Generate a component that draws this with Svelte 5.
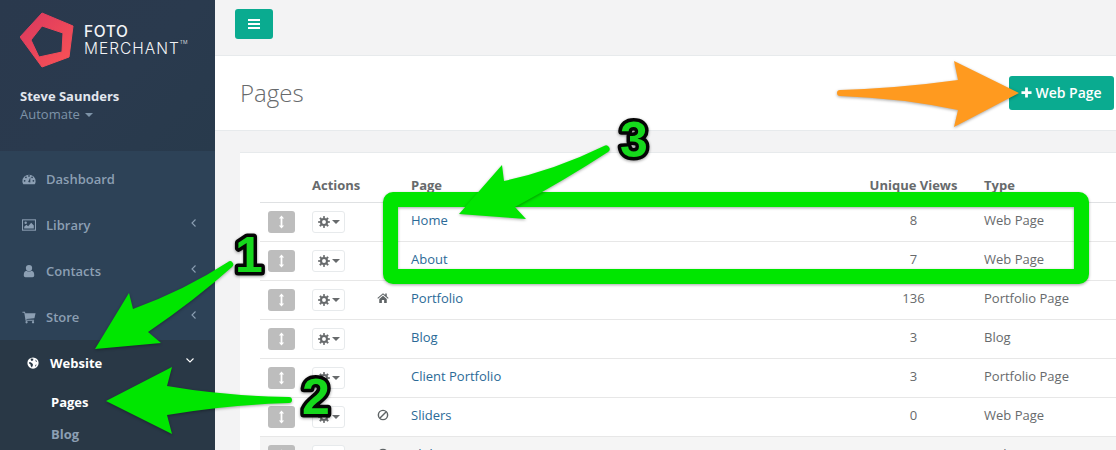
<script>
  const rows = [
    { icon: '', name: 'Home', views: 8, type: 'Web Page' },
    { icon: '', name: 'About', views: 7, type: 'Web Page' },
    { icon: 'home', name: 'Portfolio', views: 136, type: 'Portfolio Page' },
    { icon: '', name: 'Blog', views: 3, type: 'Blog' },
    { icon: '', name: 'Client Portfolio', views: 3, type: 'Portfolio Page' },
    { icon: 'ban', name: 'Sliders', views: 0, type: 'Web Page' },
    { icon: 'ban', name: 'Slider 1', views: 0, type: 'Web Page', hover: true }
  ];
  const nav = [
    { label: 'Dashboard', icon: 'dash' },
    { label: 'Library', icon: 'image', more: true },
    { label: 'Contacts', icon: 'user', more: true },
    { label: 'Store', icon: 'cart', more: true }
  ];
</script>

{#snippet gear()}
  <svg class="gear" viewBox="0 0 16 16">
    <circle cx="8" cy="8" r="4" fill="none" stroke="currentColor" stroke-width="2.8" />
    <circle cx="8" cy="8" r="6.4" fill="none" stroke="currentColor" stroke-width="2.6" pathLength="16" stroke-dasharray="1 1" stroke-dashoffset="0.5" />
  </svg>
{/snippet}

{#snippet navIcon(name)}
  <svg class="nicon" viewBox="0 0 16 16" fill="currentColor">
    {#if name === 'dash'}
      <path d="M0.5,10.5 A7.5,7.5 0 1 1 15.5,10.5 Q15.5,12.5 14.5,14 H1.5 Q0.5,12.5 0.5,10.5 Z" />
      <circle cx="3" cy="10" r="1" fill="#2d4257" />
      <circle cx="4.5" cy="6" r="1" fill="#2d4257" />
      <circle cx="8" cy="4.5" r="1" fill="#2d4257" />
      <circle cx="13" cy="10" r="1" fill="#2d4257" />
      <circle cx="11.5" cy="6" r="1" fill="#2d4257" />
      <path d="M7,11.5 L9.5,6 L9.5,12 Z" fill="#2d4257" />
    {:else if name === 'image'}
      <rect x="0.6" y="2.1" width="14.8" height="11.8" fill="none" stroke="currentColor" stroke-width="1.2" />
      <circle cx="4.2" cy="5.5" r="1.4" />
      <path d="M2.5,12 V10 L5,7.8 L7,9.5 L10.5,5.5 L13.5,8.5 V12 Z" />
    {:else if name === 'user'}
      <circle cx="8" cy="4.6" r="3.6" />
      <path d="M2,13 Q2,8 5.2,7.6 Q8,9.6 10.8,7.6 Q14,8 14,13 Q14,15 12,15 H4 Q2,15 2,13 Z" />
    {:else if name === 'cart'}
      <path d="M0.5,2 H3.4 L3.8,3.6 H15.5 L14.2,9.4 L5,10.2 L5.2,11.2 H13.8 V12.4 H4.1 L2.6,3.2 H0.5 Z" />
      <circle cx="5.2" cy="14" r="1.3" />
      <circle cx="12.6" cy="14" r="1.3" />
    {:else if name === 'globe'}
      <circle cx="8" cy="8" r="7.5" />
      <path d="M5,2 L8.5,2.4 L8,4.6 L6,5.4 L5,4 Z" fill="#293846" />
      <path d="M2.5,7 L5,7 L7.5,9 L8,10.5 L6.5,14 L5,12 L4.5,9.8 L2.8,8.6 Z" fill="#293846" />
      <path d="M11,3.4 L13.4,5.5 L12,6.5 Z M11.5,10.2 L12.8,10 L11.8,12.4 L10.6,12.6 Z" fill="#293846" />
    {/if}
  </svg>
{/snippet}

<div class="page">
  <aside class="sidebar">
    <header class="profile">
      <div class="logo">
        <svg class="mark" viewBox="0 0 80 80">
          <defs>
            <linearGradient id="lg" x1="0" y1="0" x2="1" y2="1">
              <stop offset="0" stop-color="#d9385f" />
              <stop offset="1" stop-color="#fa5355" />
            </linearGradient>
          </defs>
          <path fill="url(#lg)" fill-rule="evenodd" stroke="url(#lg)" stroke-width="1" stroke-linejoin="round"
            d="M22,13 L53,26 L49,57 L22,67 L0,37 Z M22,26 L11,40 L19,57 L42,52 L43,33 Z" />
        </svg>
        <div class="brand">
          <span class="foto">FOTO</span>
          <span class="merchant">MERCHANT<sup>TM</sup></span>
        </div>
      </div>
      <div class="who">Steve Saunders</div>
      <div class="role">Automate <i class="caret"></i></div>
    </header>
    <nav class="menu">
      {#each nav as item}
        <a class="item">
          {@render navIcon(item.icon)}
          <span>{item.label}</span>
          {#if item.more}
            <svg class="chev" viewBox="0 0 5 8"><path d="M4.5,0.5 L1,4 L4.5,7.5" fill="none" stroke="currentColor" stroke-width="1.1" /></svg>
          {/if}
        </a>
      {/each}
      <div class="active">
        <a class="item on">
          {@render navIcon('globe')}
          <span>Website</span>
          <svg class="down" viewBox="0 0 8 5"><path d="M0.5,0.5 L4,4 L7.5,0.5" fill="none" stroke="currentColor" stroke-width="1.1" /></svg>
        </a>
        <a class="sub cur">Pages</a>
        <a class="sub">Blog</a>
      </div>
    </nav>
  </aside>

  <main class="main">
    <div class="topbar">
      <button class="burger" aria-label="Menu">
        <svg viewBox="0 0 12 10" fill="#fff"><rect y="0" width="12" height="2" /><rect y="4" width="12" height="2" /><rect y="8" width="12" height="2" /></svg>
      </button>
    </div>
    <div class="heading">
      <h1>Pages</h1>
      <button class="add"><svg viewBox="0 0 12 12" fill="#fff"><path d="M4.5,0.5 H7.5 V4.5 H11.5 V7.5 H7.5 V11.5 H4.5 V7.5 H0.5 V4.5 H4.5 Z" /></svg>Web Page</button>
    </div>
    <section class="content">
      <div class="card">
        <table>
          <colgroup>
            <col class="c1" /><col class="c2" /><col class="c3" /><col class="c4" /><col class="c5" /><col />
          </colgroup>
          <thead>
            <tr><th></th><th>Actions</th><th></th><th>Page</th><th class="num">Unique Views</th><th>Type</th></tr>
          </thead>
          <tbody>
            {#each rows as r}
              <tr class:hover={r.hover}>
                <td>
                  <span class="drag">
                    <svg viewBox="0 0 8 16" fill="#fff"><path d="M4,0.5 L7,4 H5 V12 H7 L4,15.5 L1,12 H3 V4 H1 Z" /></svg>
                  </span>
                </td>
                <td><span class="act">{@render gear()}<i class="caret dark"></i></span></td>
                <td class="flag">
                  {#if r.icon === 'home'}
                    <svg viewBox="0 0 16 14" fill="#5f6466"><path d="M8,0.5 L0.5,7 L1.4,8 L8,2.4 L14.6,8 L15.5,7 L13,4.8 V1 H11 V3 Z" /><path d="M3,8.2 L8,4 L13,8.2 V13.5 H9.5 V9.8 H6.5 V13.5 H3 Z" /></svg>
                  {:else if r.icon === 'ban'}
                    <svg viewBox="0 0 14 14" fill="none" stroke="#5f6466" stroke-width="1.7"><circle cx="7" cy="7" r="5.4" /><path d="M3.2,10.8 L10.8,3.2" /></svg>
                  {/if}
                </td>
                <td><a class="link">{r.name}</a></td>
                <td class="num">{r.views}</td>
                <td>{r.type}</td>
              </tr>
            {/each}
          </tbody>
        </table>
      </div>
    </section>
  </main>

  <svg class="notes" viewBox="0 0 1116 450">
    <path class="shadow" fill="#00e600" fill-rule="evenodd"
      d="M393,192 H1079 A10,10 0 0 1 1089,202 V274 A10,10 0 0 1 1079,284 H393 A10,10 0 0 1 383,274 V202 A10,10 0 0 1 393,192 Z M398,207 V269 H1074 V207 Z" />
    <path class="shadow" fill="#00e600" d="M95,349 L129,293 L133,309 Q185,290 228,262 A3,3 0 0 1 232,267 Q195,300 148,332 L161,343 Z" />
    <path class="shadow" fill="#00e600" d="M106,401 L172,367 L167,386 Q225,396 289,397 A3,3 0 0 1 289,403 Q225,405 167,415 L172,434 Z" />
    <path class="shadow" fill="#00e600" d="M459,214 L502,165 L504,181 Q555,170 604,146 A3.5,3.5 0 0 1 608,152 Q565,180 515,207 L526,219 Z" />
    <path class="shadow" fill="#ff9a1f" d="M1019,93 L954,61 L958,80 Q900,88 840,90 A3,3 0 0 0 840,96 Q900,98 958,110 L954,127 Z" />
    <text class="digit" x="249" y="272">1</text>
    <text class="digit" x="316" y="414">2</text>
    <text class="digit" x="634" y="157">3</text>
  </svg>
</div>

<style>
  :global(body) {
    margin: 0;
    font-family: "Open Sans", "Liberation Sans", sans-serif;
    font-size: 13px;
    color: #676a6c;
  }
  .page {
    position: relative;
    display: flex;
    width: 1116px;
    height: 450px;
    overflow: hidden;
    background: #f3f3f4;
  }
  .sidebar {
    flex: 0 0 215px;
    background: #2d4257;
    color: #8c9fb3;
    font-weight: 600;
  }
  .profile {
    box-sizing: border-box;
    height: 151px;
    padding: 13px 0 0 20px;
    background: linear-gradient(135deg, #2a394d 0%, #2a3a4e 55%, #283a4c 100%);
  }
  .logo {
    display: flex;
    align-items: flex-start;
    height: 54px;
    margin-bottom: 20px;
  }
  .mark {
    flex: 0 0 80px;
    width: 80px;
    height: 80px;
    margin: -13px -16px 0 0;
  }
  .brand {
    display: flex;
    flex-direction: column;
    padding-top: 10px;
    color: #f2f3f5;
    font-family: Inter, "Liberation Sans", sans-serif;
    line-height: 17px;
  }
  .foto {
    font-size: 15.5px;
    font-weight: 500;
    letter-spacing: 0.6px;
  }
  .merchant {
    font-size: 15.5px;
    font-weight: 300;
    letter-spacing: 1px;
    white-space: nowrap;
  }
  .merchant sup {
    font-size: 5px;
    line-height: 0;
    vertical-align: 10px;
    margin-left: 0;
    letter-spacing: 0;
  }
  .who {
    color: #e3e7ee;
    font-weight: 700;
    font-size: 13px;
    line-height: 18px;
  }
  .role {
    font-weight: 400;
    font-size: 13px;
    line-height: 18px;
    color: #7e93a8;
  }
  .caret {
    display: inline-block;
    width: 0;
    height: 0;
    margin-left: 2px;
    vertical-align: 2px;
    border: 4px solid transparent;
    border-top-color: currentColor;
    border-bottom: 0;
  }
  .menu {
    padding-top: 5px;
  }
  .item {
    display: flex;
    align-items: center;
    height: 18px;
    padding: 14px 19px 14px 22px;
    line-height: 18px;
  }
  .nicon {
    flex: 0 0 14px;
    width: 14px;
    height: 14px;
    margin-right: 10px;
  }
  .chev {
    width: 5px;
    height: 8px;
    margin: -5px 0 0 auto;
  }
  .active {
    background: #293846;
    height: 110px;
  }
  .on {
    padding-left: 27px;
    padding-right: 21px;
    color: #fff;
    font-weight: 700;
  }
  .on .nicon {
    flex-basis: 12px;
    width: 12px;
    height: 12px;
    margin-right: 11px;
  }
  .down {
    width: 8px;
    height: 5px;
    margin: -6px 0 0 auto;
  }
  .sub {
    display: block;
    padding: 7px 0 7px 51px;
    line-height: 18px;
    font-weight: 700;
  }
  .cur {
    color: #fff;
  }
  .main {
    flex: 1 1 auto;
    min-width: 0;
    display: flex;
    flex-direction: column;
  }
  .topbar {
    box-sizing: border-box;
    height: 56px;
    flex: none;
    padding: 9px 20px;
    border-bottom: 1px solid #e7eaec;
  }
  button {
    border: 0;
    font: inherit;
    background: #0aab90;
    color: #fff;
    border-radius: 3px;
    padding: 0;
  }
  .burger {
    display: flex;
    align-items: center;
    justify-content: center;
    width: 38px;
    height: 30px;
  }
  .burger svg {
    width: 12px;
    height: 10px;
  }
  .heading {
    box-sizing: border-box;
    height: 75px;
    flex: none;
    display: flex;
    align-items: center;
    justify-content: space-between;
    padding: 0 2px 1px 25px;
    background: #fff;
    border-bottom: 1px solid #e7eaec;
  }
  h1 {
    margin: 0;
    font-size: 24px;
    font-weight: 300;
    color: #676a6c;
  }
  .add {
    display: flex;
    align-items: center;
    justify-content: center;
    gap: 3px;
    width: 105px;
    height: 34px;
    font-size: 14px;
    font-weight: 600;
  }
  .add svg {
    width: 11px;
    height: 11px;
  }
  .content {
    padding: 21px 0 0 25px;
    overflow: hidden;
  }
  .card {
    box-sizing: border-box;
    width: 920px;
    height: 400px;
    padding: 15px 20px 0;
    background: #fff;
    border-top: 1px solid #e7eaec;
  }
  table {
    width: 100%;
    table-layout: fixed;
    border-collapse: separate;
    border-spacing: 0;
  }
  .c1 { width: 44px; }
  .c2 { width: 65px; }
  .c3 { width: 34px; }
  .c4 { width: 448px; }
  .c5 { width: 125px; }
  th {
    padding: 8px;
    line-height: 18px;
    font-weight: 700;
    text-align: left;
    color: #676a6c;
    border-bottom: 1px solid #dfe1e3;
  }
  td {
    box-sizing: border-box;
    height: 39px;
    padding: 8px;
    line-height: 18.5px;
    vertical-align: top;
    border-bottom: 1px solid #e7e7e7;
  }
  .num {
    text-align: center;
  }
  .hover td {
    background: #f5f5f5;
  }
  .drag {
    display: flex;
    align-items: center;
    justify-content: center;
    width: 27px;
    height: 22px;
    border-radius: 3px;
    background: #bdbdbd;
  }
  .drag svg {
    width: 7px;
    height: 14px;
  }
  .act {
    box-sizing: border-box;
    display: flex;
    align-items: center;
    justify-content: center;
    gap: 2px;
    width: 33px;
    height: 22px;
    border: 1px solid #e7eaec;
    border-radius: 3px;
    background: #fff;
  }
  .gear {
    width: 12px;
    height: 12px;
  }
  .caret.dark {
    margin: 0;
    vertical-align: 0;
  }
  .flag {
    padding: 11px 0 0 8px;
  }
  .flag svg {
    display: block;
    width: 12px;
    height: 12px;
  }
  .link {
    color: #2b6a97;
  }
  .notes {
    position: absolute;
    inset: 0;
    width: 1116px;
    height: 450px;
    pointer-events: none;
  }
  .shadow {
    filter: drop-shadow(0 1px 1.5px rgba(0, 0, 0, 0.35));
  }
  .digit {
    font-family: "Liberation Sans", sans-serif;
    font-weight: 700;
    font-size: 50px;
    text-anchor: middle;
    fill: #16d81c;
    stroke: #050505;
    stroke-width: 7px;
    stroke-linejoin: round;
    paint-order: stroke;
    filter: drop-shadow(0 1px 1.5px rgba(0, 0, 0, 0.4));
  }
</style>
